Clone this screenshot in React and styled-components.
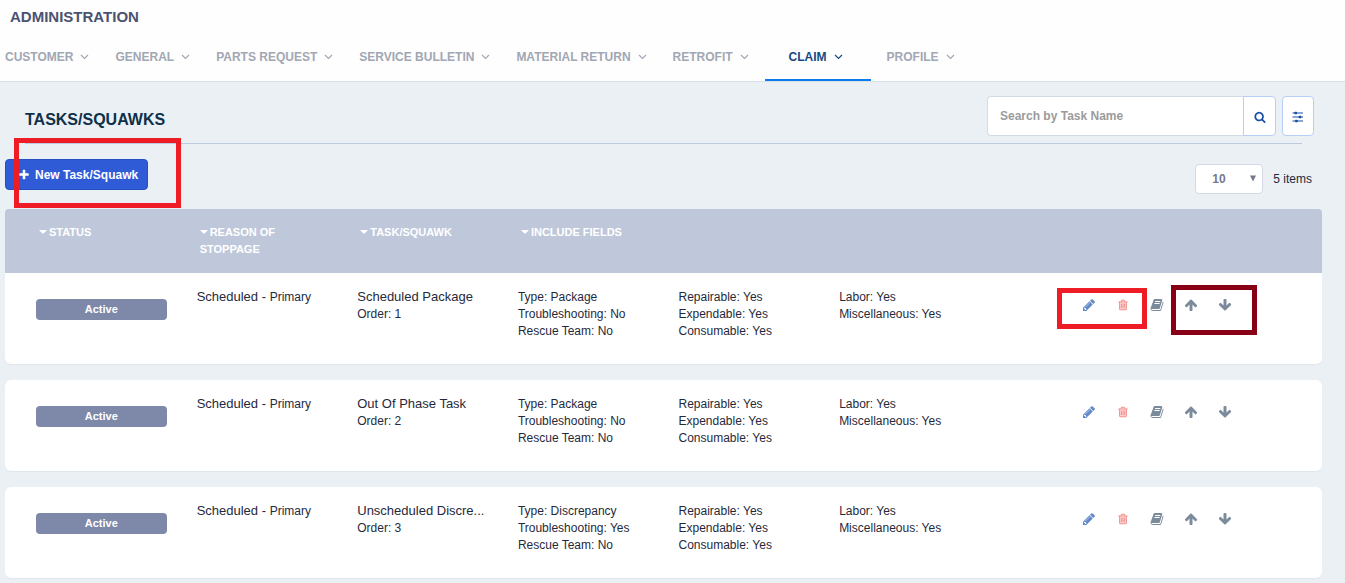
import React from "react";
import styled, { createGlobalStyle, css } from "styled-components";

const GlobalStyle = createGlobalStyle`
  *, *::before, *::after { box-sizing: border-box; }
  body {
    margin: 0;
    background: #ebf0f5;
    color: #1f2a3c;
    font-family: "Liberation Sans", Arial, sans-serif;
    font-size: 12px;
    line-height: 17px;
  }
  button, input, select { font: inherit; color: inherit; }
  button { cursor: pointer; }
`;

const ICONS = {
  plus: "M1600 736v192q0 40-28 68t-68 28h-416v416q0 40-28 68t-68 28h-192q-40 0-68-28t-28-68v-416h-416q-40 0-68-28t-28-68v-192q0-40 28-68t68-28h416v-416q0-40 28-68t68-28h192q40 0 68 28t28 68v416h416q40 0 68 28t28 68z",
  search:
    "M1216 832q0-185-131.500-316.500t-316.500-131.500-316.500 131.500-131.500 316.500 131.500 316.500 316.500 131.500 316.500-131.500 131.500-316.500zm512 832q0 52-38 90t-90 38q-54 0-90-38l-343-342q-179 124-399 124-143 0-273.500-55.500t-225-150-150-225-55.500-273.500 55.500-273.500 150-225 225-150 273.500-55.500 273.500 55.500 225 150 150 225 55.500 273.500q0 220-124 399l343 343q37 37 37 90z",
  pencil:
    "M491 1536l91-91-235-235-91 91v107h128v128h107zm523-928q0-22-22-22-10 0-17 7l-542 542q-7 7-7 17 0 22 22 22 10 0 17-7l542-542q7-7 7-17zm-54-192l416 416-832 832h-416v-416zm683 96q0 53-37 90l-166 166-416-416 166-165q36-38 90-38 53 0 91 38l235 234q37 39 37 91z",
  trash:
    "M704 736v576q0 14-9 23t-23 9h-64q-14 0-23-9t-9-23v-576q0-14 9-23t23-9h64q14 0 23 9t9 23zm256 0v576q0 14-9 23t-23 9h-64q-14 0-23-9t-9-23v-576q0-14 9-23t23-9h64q14 0 23 9t9 23zm256 0v576q0 14-9 23t-23 9h-64q-14 0-23-9t-9-23v-576q0-14 9-23t23-9h64q14 0 23 9t9 23zm128 724v-948h-896v948q0 22 7 40.500t14.500 27 10.500 8.500h832q3 0 10.500-8.500t14.500-27 7-40.500zm-672-1076h448l-48-117q-7-9-17-11h-317q-10 2-17 11zm928 32v64q0 14-9 23t-23 9h-96v948q0 83-47 143.500t-113 60.500h-832q-66 0-113-58.500t-47-141.500v-952h-96q-14 0-23-9t-9-23v-64q0-14 9-23t23-9h309l70-167q15-37 54-63t79-26h320q40 0 79 26t54 63l70 167h309q14 0 23 9t9 23z",
  book: "M1703 478q40 57 18 129l-275 906q-19 64-76.500 107.500t-122.500 43.500h-923q-77 0-148.500-53.500t-99.500-131.500q-24-67-2-127 0-4 3-27t4-37q1-8-3-21.500t-3-19.500q2-11 8-21t16.500-23.500 16.500-23.500q23-38 45-91.500t30-91.500q3-10 .5-30t-.5-28q3-11 17-28t17-23q21-36 42-92t25-90q1-9-2.500-32t.5-28q4-13 22-30.500t22-22.500q19-26 42.500-84.500t27.500-96.500q1-8-3-25.500t-2-26.500q2-8 9-18t18-23 17-21q8-12 16.500-30.500t15-35 16-36 19.500-32 26.500-23.500 36-11.500 47.500 5.500l-1 3q38-9 51-9h761q74 0 114 56t18 130l-274 906q-36 119-71.500 153.500t-128.500 34.500h-869q-27 0-38 15-11 16-1 43 24 70 144 70h923q29 0 56-15.500t35-41.500l300-987q7-22 5-57 38 15 59 43zm-1064 2q-4 13 2 22.500t20 9.500h608q13 0 25.500-9.500t16.500-22.500l21-64q4-13-2-22.500t-20-9.500h-608q-13 0-25.500 9.500t-16.500 22.500zm-83 256q-4 13 2 22.500t20 9.500h608q13 0 25.500-9.500t16.500-22.500l21-64q4-13-2-22.500t-20-9.500h-608q-13 0-25.500 9.500t-16.500 22.500z",
  arrow:
    "M1675 971q0 51-37 90l-75 75q-38 38-91 38-54 0-90-38l-294-293v704q0 52-37.500 84.500t-90.500 32.500h-128q-53 0-90.500-32.500t-37.500-84.500v-704l-294 293q-36 38-90 38t-90-38l-75-75q-38-38-38-90 0-53 38-91l651-651q35-37 90-37 54 0 91 37l651 651q37 39 37 91z",
};

const Icon = ({ name, size, flip }) => (
  <svg width={size} height={size} viewBox="0 0 1792 1792" fill="currentColor" aria-hidden="true">
    {name === "trash" && <path d="M448 512h896v1024H448z" opacity=".4" />}
    <path d={ICONS[name]} transform={flip ? "rotate(180 896 896)" : undefined} />
  </svg>
);

const Chevron = () => (
  <svg width="9" height="6" viewBox="0 0 9 6" fill="none" stroke="currentColor" strokeWidth="1.2" aria-hidden="true">
    <path d="M1 1l3.500 3.500L8 1" />
  </svg>
);

const Sliders = () => (
  <svg width="12" height="12" viewBox="0 0 12 12" fill="currentColor" aria-hidden="true">
    <path d="M.5 1.500h10.500v1H.5zM.5 5.500h10.500v1H.5zM.5 9.500h10.500v1H.5z" />
    <rect x="2.500" y=".7" width="2.500" height="2.600" rx=".6" />
    <rect x="6.700" y="4.700" width="2.500" height="2.600" rx=".6" />
    <rect x="3.200" y="8.700" width="2.500" height="2.600" rx=".6" />
  </svg>
);

const Masthead = styled.header`
  background: #fefefe;
  border-bottom: 1px solid #d8e1e9;
`;

const PageTitle = styled.h1`
  margin: 0;
  padding: 8px 10px 7px;
  color: #4a5270;
  font-size: 15px;
  line-height: 17px;
`;

const Nav = styled.nav`
  display: flex;
  gap: 26px;
  padding: 0 5px;
`;

const NavLink = styled.a`
  display: flex;
  align-items: center;
  gap: 7px;
  height: 49px;
  padding-top: 3px;
  border-bottom: 2px solid transparent;
  color: #a1a7b3;
  font-weight: bold;
  text-decoration: none;
  white-space: nowrap;
  ${(p) =>
    p.$active &&
    css`
      margin: 0 -10px;
      padding: 3px 28px 0 24px;
      border-color: #0a7cec;
      color: #164a80;
    `}
`;

const Content = styled.main`
  padding: 14px 23px 5px 5px;
`;

const Heading = styled.div`
  display: flex;
  justify-content: space-between;
  padding: 0 8px 0 20px;
`;

const SectionTitle = styled.h2`
  align-self: flex-end;
  margin: 0;
  color: #0e3048;
  font-size: 16px;
  line-height: 32px;
`;

const Rule = styled.hr`
  height: 1px;
  margin: 7px 20px 0;
  border: 0;
  background: #bccbdd;
`;

const SearchForm = styled.form`
  display: flex;
  height: 40px;
`;

const SearchInput = styled.input`
  width: 256px;
  padding: 0 12px;
  border: 1px solid #d3dbe7;
  border-right: 0;
  border-radius: 4px 0 0 4px;
  background: #fff;
  font-weight: bold;
  &::placeholder { color: #9b9b9b; opacity: 1; }
`;

const SquareButton = styled.button`
  display: grid;
  place-items: center;
  width: ${(p) => (p.$joined ? "33px" : "32px")};
  padding: 2px 0 0;
  border: 1px solid #b5cff8;
  border-radius: ${(p) => (p.$joined ? "0 4px 4px 0" : "4px")};
  margin-left: ${(p) => (p.$joined ? 0 : "6px")};
  background: #fff;
  color: #1a4ea6;
`;

const Toolbar = styled.div`
  position: relative;
  display: flex;
  justify-content: space-between;
  align-items: flex-start;
  padding: 15px 10px 15px 0;
`;

const PrimaryButton = styled.button`
  display: flex;
  align-items: center;
  gap: 5px;
  height: 31px;
  padding: 1px 9px 0 12px;
  border: 1px solid #264fc4;
  border-radius: 4px;
  background: #305bd6;
  color: #fff;
  font-weight: bold;
`;

const Pager = styled.div`
  display: flex;
  align-items: center;
  gap: 10px;
  padding-top: 5px;
`;

const SelectWrap = styled.span`
  position: relative;
  display: block;
  color: #74798a;
`;

const SizeSelect = styled.select`
  display: block;
  width: 68px;
  height: 30px;
  padding: 0 16px;
  appearance: none;
  border: 1px solid #d3dae6;
  border-radius: 4px;
  background: #fff;
  font-weight: bold;
`;

const SelectArrow = styled.svg`
  position: absolute;
  top: 11px;
  right: 7px;
  pointer-events: none;
`;

const Mark = styled.span`
  position: absolute;
  top: ${(p) => p.$top}px;
  left: ${(p) => p.$left}px;
  width: ${(p) => p.$width}px;
  height: ${(p) => p.$height}px;
  border: 5px solid ${(p) => (p.$dark ? "#880015" : "#ee1c24")};
  pointer-events: none;
`;

const Table = styled.table`
  display: block;
`;

const Head = styled.thead`
  display: block;
`;

const Body = styled.tbody`
  display: flex;
  flex-direction: column;
  gap: 16px;
`;

const rowGrid = css`
  display: grid;
  grid-template-columns: repeat(8, minmax(0, 1fr));
  padding: 0 16px;
`;

const HeadRow = styled.tr`
  ${rowGrid}
  min-height: 64px;
  border-radius: 4px 4px 0 0;
  background: #bfc8da;
`;

const HeadCell = styled.th`
  padding: 15px 15px 0 18px;
  text-align: left;
`;

const SortButton = styled.button`
  display: block;
  padding: 0;
  border: 0;
  background: none;
  color: #fff;
  font-size: 11px;
  font-weight: bold;
  line-height: 17px;
  text-align: left;
  svg { margin-right: 2px; vertical-align: 2px; }
`;

const Card = styled.tr`
  ${rowGrid}
  min-height: 91px;
  border-radius: ${(p) => (p.$first ? "0 0 6px 6px" : "6px")};
  background: #fff;
  box-shadow: 0 1px 1px #dfe6ec;
`;

const Cell = styled.td`
  padding: 15px 15px 0;
  white-space: nowrap;
`;

const FieldsCell = styled(Cell)`
  padding-top: 16px;
`;

const Lead = styled.span`
  font-size: 13px;
`;

const TaskName = styled.div`
  font-size: 13px;
  line-height: 18px;
`;

const Badge = styled.div`
  margin-top: 11px;
  border-radius: 4px;
  background: #7e89aa;
  color: #fff;
  font-size: 11px;
  font-weight: bold;
  line-height: 21px;
  text-align: center;
`;

const ActionsCell = styled.td`
  grid-column: span 2;
  display: flex;
  justify-content: flex-end;
  padding: 15px 64px 0 0;
`;

const Actions = styled.div`
  position: relative;
  display: flex;
  height: 34px;
`;

const ActionButton = styled.button`
  display: grid;
  place-items: center;
  width: 34px;
  padding: 0;
  border: 0;
  background: none;
  color: ${(p) => p.$color || "#7c8b9c"};
`;

const NAV = ["CUSTOMER", "GENERAL", "PARTS REQUEST", "SERVICE BULLETIN", "MATERIAL RETURN", "RETROFIT", "CLAIM", "PROFILE"];

const COLUMNS = ["STATUS", "REASON OF STOPPAGE", "TASK/SQUAWK", "INCLUDE FIELDS"];

const TASKS = [
  { name: "Scheduled Package", order: 1, type: "Package", trouble: "No" },
  { name: "Out Of Phase Task", order: 2, type: "Package", trouble: "No" },
  { name: "Unscheduled Discre...", order: 3, type: "Discrepancy", trouble: "Yes" },
];

const TaskRow = ({ task, first }) => (
  <Card $first={first}>
    <Cell><Badge>Active</Badge></Cell>
    <Cell><Lead>Scheduled - </Lead>Primary</Cell>
    <Cell>
      <TaskName>{task.name}</TaskName>
      <div>Order: {task.order}</div>
    </Cell>
    <FieldsCell>
      <div>Type: {task.type}</div>
      <div>Troubleshooting: {task.trouble}</div>
      <div>Rescue Team: No</div>
    </FieldsCell>
    <FieldsCell>
      <div>Repairable: Yes</div>
      <div>Expendable: Yes</div>
      <div>Consumable: Yes</div>
    </FieldsCell>
    <FieldsCell>
      <div>Labor: Yes</div>
      <div>Miscellaneous: Yes</div>
    </FieldsCell>
    <ActionsCell>
      <Actions>
        <ActionButton $color="#6389ca" aria-label="Edit"><Icon name="pencil" size={14} /></ActionButton>
        <ActionButton $color="#f28a87" aria-label="Delete"><Icon name="trash" size={12} /></ActionButton>
        <ActionButton aria-label="Log"><Icon name="book" size={14} /></ActionButton>
        <ActionButton aria-label="Move up"><Icon name="arrow" size={14} /></ActionButton>
        <ActionButton aria-label="Move down"><Icon name="arrow" size={14} flip /></ActionButton>
        {first && (
          <>
            <Mark $top={0} $left={-15} $width={90} $height={41} />
            <Mark $dark $top={-3} $left={99} $width={86} $height={50} />
          </>
        )}
      </Actions>
    </ActionsCell>
  </Card>
);

export default function App() {
  return (
    <>
      <GlobalStyle />
      <Masthead>
        <PageTitle>ADMINISTRATION</PageTitle>
        <Nav>
          {NAV.map((label) => (
            <NavLink key={label} href="#" $active={label === "CLAIM"}>
              {label}
              <Chevron />
            </NavLink>
          ))}
        </Nav>
      </Masthead>
      <Content>
        <Heading>
          <SectionTitle>TASKS/SQUAWKS</SectionTitle>
          <SearchForm onSubmit={(e) => e.preventDefault()}>
            <SearchInput type="text" aria-label="Search by Task Name" placeholder="Search by Task Name" />
            <SquareButton $joined type="submit" aria-label="Search"><Icon name="search" size={12} /></SquareButton>
            <SquareButton type="button" aria-label="Filters"><Sliders /></SquareButton>
          </SearchForm>
        </Heading>
        <Rule />
        <Toolbar>
          <PrimaryButton type="button">
            <Icon name="plus" size={12} />
            New Task/Squawk
          </PrimaryButton>
          <Pager>
            <SelectWrap>
              <SizeSelect aria-label="Items per page" defaultValue="10">
                <option>10</option>
                <option>25</option>
                <option>50</option>
              </SizeSelect>
              <SelectArrow width="6" height="7" viewBox="0 0 6 7" fill="currentColor" aria-hidden="true">
                <path d="M0 .5h6L3 6.500z" />
              </SelectArrow>
            </SelectWrap>
            <span>5 items</span>
          </Pager>
          <Mark $top={-6} $left={9} $width={167} $height={70} />
        </Toolbar>
        <Table>
          <Head>
            <HeadRow>
              {COLUMNS.map((label) => (
                <HeadCell key={label} scope="col">
                  <SortButton type="button">
                    <svg width="8" height="4" viewBox="0 0 8 4" fill="currentColor" aria-hidden="true">
                      <path d="M0 0h8L4 4z" />
                    </svg>
                    {label}
                  </SortButton>
                </HeadCell>
              ))}
            </HeadRow>
          </Head>
          <Body>
            {TASKS.map((task, i) => (
              <TaskRow key={task.order} task={task} first={i === 0} />
            ))}
          </Body>
        </Table>
      </Content>
    </>
  );
}
